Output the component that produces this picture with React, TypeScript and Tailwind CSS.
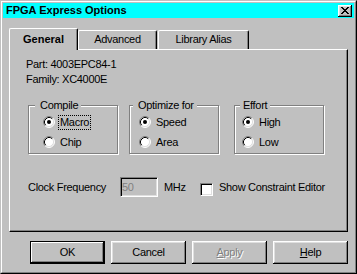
import React from "react";

const raised =
  "shadow-[inset_-1px_-1px_0_#000,inset_1px_1px_0_#fff,inset_-2px_-2px_0_#808080,inset_2px_2px_0_#dfdfdf]";

function Radio({ checked }: { checked?: boolean }) {
  return (
    <svg width="12" height="12" viewBox="0 0 12 12" className="shrink-0">
      <circle cx="6" cy="6" r="5" fill="#fff" />
      <path d="M2.11 9.89 A5.5 5.5 0 0 1 9.89 2.11" stroke="#808080" strokeWidth="1" fill="none" />
      <path d="M9.89 2.11 A5.5 5.5 0 0 1 2.11 9.89" stroke="#fff" strokeWidth="1" fill="none" />
      <path d="M2.82 9.18 A4.5 4.5 0 0 1 9.18 2.82" stroke="#000" strokeWidth="1" fill="none" />
      <path d="M9.18 2.82 A4.5 4.5 0 0 1 2.82 9.18" stroke="#dfdfdf" strokeWidth="1" fill="none" />
      {checked && <circle cx="6" cy="6" r="2" fill="#000" />}
    </svg>
  );
}

function RadioRow({ label, checked, focused }: { label: string; checked?: boolean; focused?: boolean }) {
  return (
    <div className="flex items-center h-[20px] gap-[3px]">
      <Radio checked={checked} />
      <span
        className={
          "px-px border leading-[13px] " +
          (focused ? "border-dotted border-black" : "border-transparent")
        }
      >
        {label}
      </span>
    </div>
  );
}

function Group({
  title,
  labelLeft,
  labelPad,
  padLeft,
  className,
  children,
}: {
  title: string;
  labelLeft: string;
  labelPad: string;
  padLeft: string;
  className?: string;
  children: React.ReactNode;
}) {
  return (
    <div
      className={
        "relative w-[90px] h-[49px] border border-[#808080] shadow-[inset_1px_1px_0_#fff,1px_1px_0_#fff] pt-[6px] " +
        padLeft +
        " " +
        (className ?? "")
      }
    >
      <span className={"absolute top-[-7px] bg-[#c0c0c0] leading-[13px] pr-[3px] " + labelLeft + " " + labelPad}>
        {title}
      </span>
      {children}
    </div>
  );
}

function Tab({ label, active, w }: { label: string; active?: boolean; w: string }) {
  if (active) {
    return (
      <div
        className={
          "relative z-10 -mb-px h-[22px] bg-[#c0c0c0] border-l border-t border-r border-l-white border-t-white border-r-black rounded-t-[2px] shadow-[inset_-1px_0_0_#808080] flex justify-center pt-[4px] font-bold tracking-normal " +
          w
        }
      >
        {label}
      </div>
    );
  }
  return (
    <div
      className={
        "h-[19px] bg-[#c0c0c0] border-l border-t border-r border-l-white border-t-white border-r-black rounded-t-[2px] shadow-[inset_-1px_0_0_#808080] flex justify-center pt-[2px] " +
        w
      }
    >
      {label}
    </div>
  );
}

function Btn({
  children,
  def,
}: {
  children: React.ReactNode;
  def?: boolean;
}) {
  return (
    <div
      className={
        "w-[75px] h-[23px] flex items-center justify-center pb-px " +
        (def
          ? "border border-black shadow-[inset_-1px_-1px_0_#000,inset_1px_1px_0_#fff,inset_-2px_-2px_0_#808080]"
          : raised)
      }
    >
      {children}
    </div>
  );
}

export default function App() {
  return (
    <div className="w-[357px] h-[274px] bg-[#c0c0c0] border border-t-[#c0c0c0] border-l-[#c0c0c0] border-r-black border-b-black font-['Liberation_Sans',Arial,sans-serif] text-[11px] leading-[13px] tracking-[-0.3px] text-black select-none">
      <div className="h-full border border-t-white border-l-white border-r-[#808080] border-b-[#808080] p-px flex flex-col">
        {/* Title bar */}
        <div className="h-[15px] bg-[#00ffff] flex items-center pl-[3px] pr-[2px]">
          <span className="font-bold text-[11px] leading-[13px] tracking-normal">FPGA Express Options</span>
          <div className={"ml-auto w-[14px] h-[12px] bg-[#c0c0c0] flex items-center justify-center " + raised}>
            <svg width="8" height="7" viewBox="0 0 8 7" shapeRendering="crispEdges">
              <rect x="0" y="0" width="2" height="1" fill="#000" />
              <rect x="6" y="0" width="2" height="1" fill="#000" />
              <rect x="1" y="1" width="2" height="1" fill="#000" />
              <rect x="5" y="1" width="2" height="1" fill="#000" />
              <rect x="2" y="2" width="4" height="1" fill="#000" />
              <rect x="3" y="3" width="2" height="1" fill="#000" />
              <rect x="2" y="4" width="4" height="1" fill="#000" />
              <rect x="1" y="5" width="2" height="1" fill="#000" />
              <rect x="5" y="5" width="2" height="1" fill="#000" />
              <rect x="0" y="6" width="2" height="1" fill="#000" />
              <rect x="6" y="6" width="2" height="1" fill="#000" />
            </svg>
          </div>
        </div>

        <div className="px-[6px] mt-[10px] flex flex-col">
          {/* Tabs */}
          <div className="flex items-end h-[21px]">
            <Tab label="General" active w="w-[69px]" />
            <Tab label="Advanced" w="w-[79px]" />
            <div className="w-px" />
            <Tab label="Library Alias" w="w-[91px]" />
          </div>

          {/* Panel */}
          <div className="w-[339px] h-[183px] border border-t-white border-l-white border-r-black border-b-black shadow-[inset_-1px_-1px_0_#808080] pl-[16px] pt-[8px] flex flex-col">
            <div className="leading-[13px]">Part: 4003EPC84-1</div>
            <div className="leading-[13px] mt-[2px]">Family: XC4000E</div>

            <div className="flex mt-[19px] ml-[2px]">
              <Group title="Compile" labelLeft="left-[6px]" labelPad="pl-[5px]" padLeft="pl-[14px]">
                <RadioRow label="Macro" checked focused />
                <RadioRow label="Chip" />
              </Group>
              <Group
                title="Optimize for"
                labelLeft="left-[3px]"
                labelPad="pl-[5px]"
                padLeft="pl-[9px]"
                className="ml-[11px]"
              >
                <RadioRow label="Speed" checked />
                <RadioRow label="Area" />
              </Group>
              <Group
                title="Effort"
                labelLeft="left-[5px]"
                labelPad="pl-[3px]"
                padLeft="pl-[7px]"
                className="ml-[15px]"
              >
                <RadioRow label="High" checked />
                <RadioRow label="Low" />
              </Group>
            </div>

            <div className="flex items-center h-[20px] mt-[23px] ml-[2px]">
              <span className="w-[92px]">Clock Frequency</span>
              <div className="w-[38px] h-[20px] border border-t-[#808080] border-l-[#808080] border-r-white border-b-white shadow-[inset_1px_1px_0_#000,inset_-1px_-1px_0_#dfdfdf] bg-[#c0c0c0] flex items-center pl-[1px] text-[#808080]">
                50
              </div>
              <span className="ml-[6px] w-[36px]">MHz</span>
              <div className="self-start mt-[6px] w-[13px] h-[13px] border border-t-[#808080] border-l-[#808080] border-r-white border-b-white shadow-[inset_1px_1px_0_#000,inset_-1px_-1px_0_#dfdfdf] bg-white" />
              <span className="ml-[6px]">Show Constraint Editor</span>
            </div>
          </div>

          {/* Buttons */}
          <div className="flex justify-end gap-[6px] mt-[9px]">
            <Btn def>OK</Btn>
            <Btn>Cancel</Btn>
            <Btn>
              <span className="text-[#808080] [text-shadow:1px_1px_0_#fff]">
                <span className="underline">A</span>pply
              </span>
            </Btn>
            <Btn>
              <span>
                <span className="underline">H</span>elp
              </span>
            </Btn>
          </div>
        </div>
      </div>
    </div>
  );
}
